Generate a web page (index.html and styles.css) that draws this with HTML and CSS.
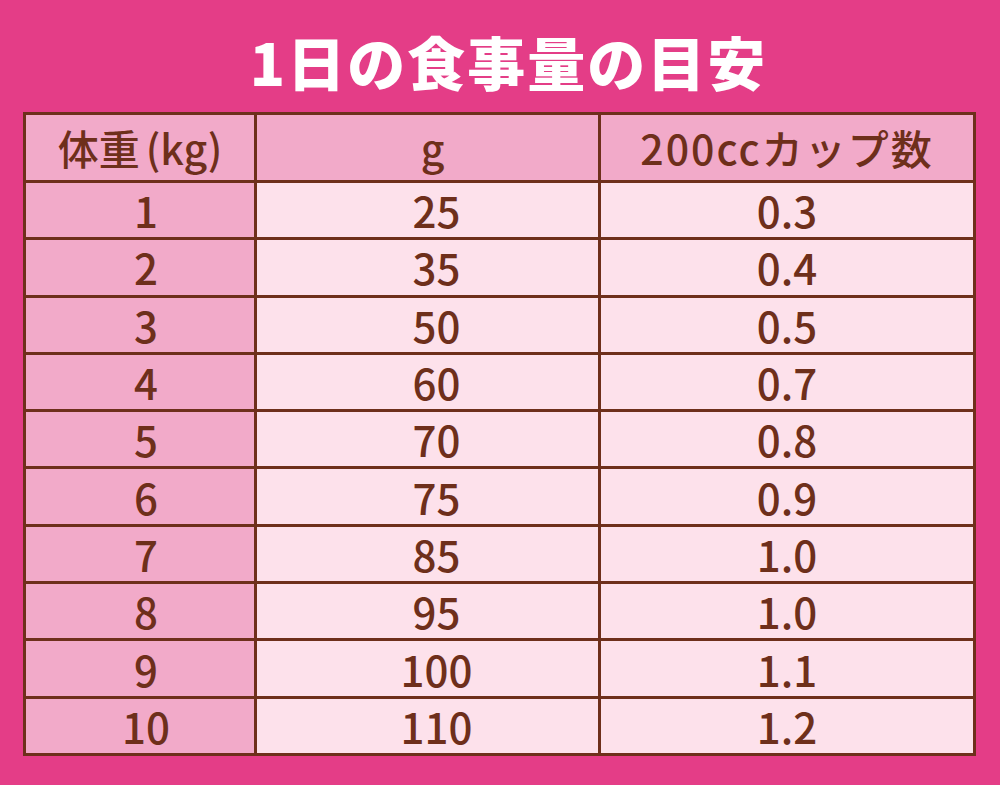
FILE: index.html
```html
<!DOCTYPE html>
<html lang="ja">
<head>
<meta charset="utf-8">
<title>1日の食事量の目安</title>
<link rel="stylesheet" href="styles.css">
</head>
<body>
<div class="page">
  <h1 class="title">1日の食事量の目安</h1>
  <div class="table">
    <div class="cell head">体重<span class="paren">(kg)</span></div>
    <div class="cell head c2">g</div>
    <div class="cell head wide">200ccカップ数</div>

    <div class="cell key">1</div><div class="cell c2">25</div><div class="cell">0.3</div>
    <div class="cell key">2</div><div class="cell c2">35</div><div class="cell">0.4</div>
    <div class="cell key">3</div><div class="cell c2">50</div><div class="cell">0.5</div>
    <div class="cell key">4</div><div class="cell c2">60</div><div class="cell">0.7</div>
    <div class="cell key">5</div><div class="cell c2">70</div><div class="cell">0.8</div>
    <div class="cell key">6</div><div class="cell c2">75</div><div class="cell">0.9</div>
    <div class="cell key">7</div><div class="cell c2">85</div><div class="cell">1.0</div>
    <div class="cell key">8</div><div class="cell c2">95</div><div class="cell">1.0</div>
    <div class="cell key">9</div><div class="cell c2">100</div><div class="cell">1.1</div>
    <div class="cell key">10</div><div class="cell c2">110</div><div class="cell">1.2</div>
  </div>
</div>
</body>
</html>
```

FILE: styles.css
```css
html, body {
  margin: 0;
  padding: 0;
}
body {
  background: #e43d87;
  font-family: "Noto Sans CJK JP", "Noto Sans", sans-serif;
}
.page {
  width: 1000px;
  height: 785px;
  padding-left: 23px;
  box-sizing: border-box;
}
.title {
  margin: 0;
  height: 112px;
  width: 953px;
  display: flex;
  align-items: center;
  justify-content: center;
  color: #ffffff;
  font-size: 58px;
  font-weight: 900;
  letter-spacing: 2px;
  line-height: 1;
  padding-top: 10px;
  padding-left: 18px;
  box-sizing: border-box;
}
.table {
  width: 953px;
  display: grid;
  grid-template-columns: 228px 341px 372px;
  grid-template-rows: 65px repeat(10, 54.3px);
  gap: 3px;
  padding: 3px;
  box-sizing: border-box;
  background: #6e2f1b;
}
.cell {
  display: flex;
  align-items: center;
  justify-content: center;
  background: #fde1eb;
  color: #6e2f1b;
  font-size: 42px;
  font-weight: 500;
  line-height: 1;
}
.head {
  background: #f2aac9;
  font-size: 41px;
}
.paren {
  margin-left: 6px;
}
.wide {
  letter-spacing: 2px;
}
.key {
  background: #f2aac9;
  padding-left: 12px;
}
.head.key, .head:first-child {
  padding-left: 0;
}
.c2 {
  padding-left: 18px;
}
.head.c2 {
  padding-left: 10px;
}
```
